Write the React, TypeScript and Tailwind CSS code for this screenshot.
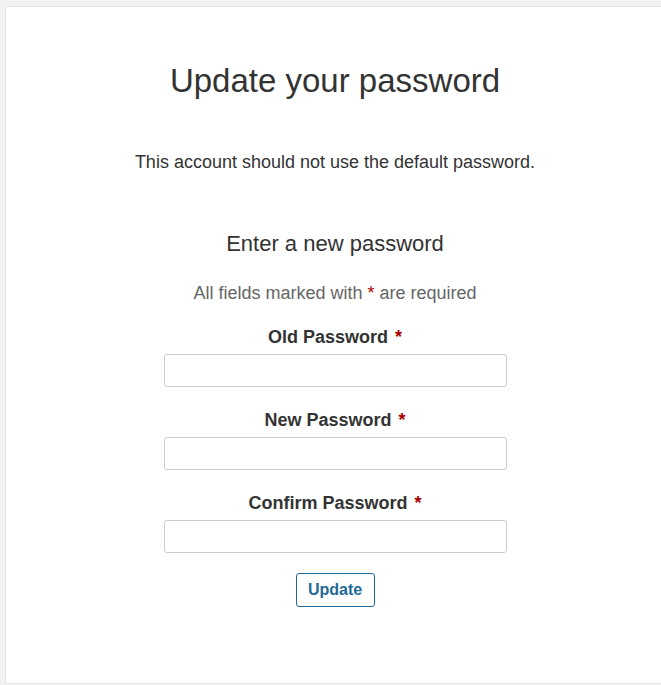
const font = { fontFamily: '"Liberation Sans", Arial, sans-serif' }

function Field({ label }: { label: string }) {
  return (
    <div className="flex flex-col items-center">
      <label className="text-[18px] font-bold text-[#333] leading-[24px]">
        {label} <span className="text-[#a00] ml-0.5">*</span>
      </label>
      <input
        type="password"
        className="mt-[5px] w-[343px] h-[33px] border border-[#ccc] rounded-[3px] bg-white px-2 outline-none"
      />
    </div>
  )
}

export default function App() {
  return (
    <div className="w-[661px] h-[685px] overflow-hidden bg-[#f2f2f2] pl-[5px] pt-[6px]" style={font}>
      <div className="w-[659px] h-[678px] bg-white border-l border-t border-b border-[#e3e3e3] flex flex-col items-center text-[#333]">
        <h1 className="mt-[54px] text-[33px] leading-[40px] font-normal">Update your password</h1>
        <p className="mt-[49px] text-[18px] leading-[24px]">This account should not use the default password.</p>
        <h2 className="mt-[56px] text-[22px] leading-[28px]">Enter a new password</h2>
        <p className="mt-[24px] text-[18px] leading-[22px] text-[#666]">
          All fields marked with <span className="text-[#a00]">*</span> are required
        </p>
        <div className="mt-[21px] flex flex-col gap-[21px]">
          <Field label="Old Password" />
          <Field label="New Password" />
          <Field label="Confirm Password" />
        </div>
        <button className="mt-[20px] h-[34px] w-[79px] border border-[#1f6a99] rounded-[3px] text-[#1f6a99] font-bold text-[16px] bg-white">
          Update
        </button>
      </div>
    </div>
  )
}
